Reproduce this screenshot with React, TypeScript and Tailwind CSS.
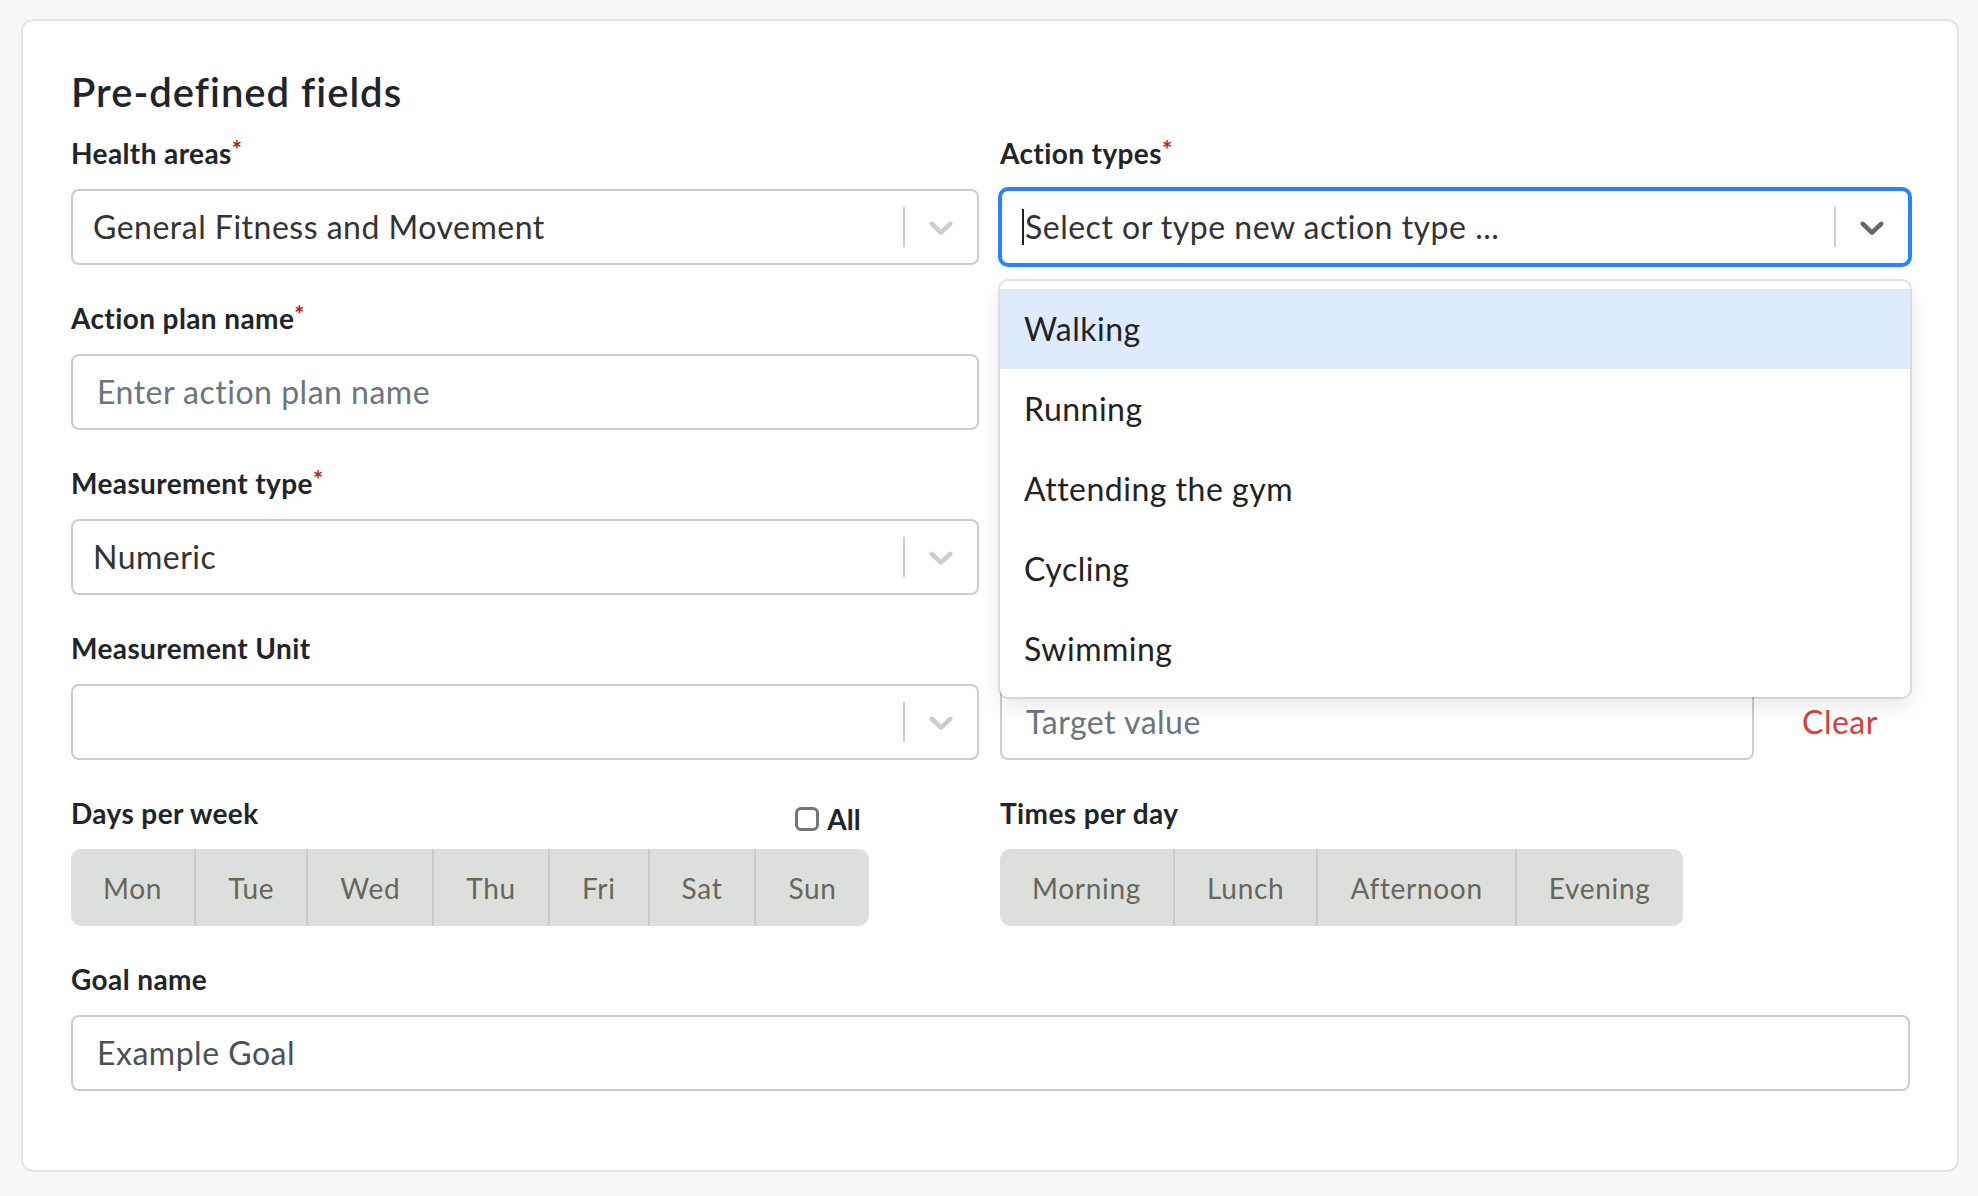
import React from "react";

const FONT = { fontFamily: "Lato, 'Open Sans', sans-serif" };

const Chevron = ({ dark }: { dark?: boolean }) => (
  <svg
    viewBox="0 0 20 20"
    className={dark ? "h-[40px] w-[40px] fill-[#666666]" : "h-[40px] w-[40px] fill-[#cccccc]"}
    aria-hidden="true"
  >
    <path d="M4.516 7.548c0.436-0.446 1.043-0.481 1.576 0l3.908 3.747 3.908-3.747c0.533-0.481 1.141-0.446 1.574 0 0.436 0.445 0.408 1.197 0 1.615-0.406 0.418-4.695 4.502-4.695 4.502-0.217 0.223-0.502 0.335-0.787 0.335s-0.57-0.112-0.789-0.335c0 0-4.287-4.084-4.695-4.502s-0.436-1.17 0-1.615z" />
  </svg>
);

const Label = ({ text, required }: { text?: string; required?: boolean }) => (
  <div className="mb-[18px] h-[36px] text-[28px] font-bold leading-[36px] tracking-[0.4px] text-[#212529]">
    {text}
    {required && <span className="relative -top-[5px] text-[24px] text-[#b71c1c]">*</span>}
  </div>
);

const Select = ({ value, focused, placeholder }: { value?: string; focused?: boolean; placeholder?: string }) => (
  <div
    className={
      focused
        ? "flex h-[76px] items-center rounded-[8px] border-2 border-[#2684ff] bg-white shadow-[0_0_0_2px_#2684ff]"
        : "flex h-[76px] items-center rounded-[8px] border-2 border-[#cccccc] bg-white"
    }
  >
    <div className="flex flex-1 items-center px-[20px] text-[32px] tracking-[0.5px] text-[#333333]">
      {focused && <span className="mr-[1px] h-[36px] w-[2px] bg-[#222222]" />}
      {value ?? placeholder}
    </div>
    <span className="h-[40px] w-[2px] bg-[#cccccc]" />
    <div className="px-[16px]">
      <Chevron dark={focused} />
    </div>
  </div>
);

const Input = ({ placeholder, value }: { placeholder?: string; value?: string }) => (
  <div className="flex h-[76px] items-center rounded-[8px] border-2 border-[#cccccc] bg-white px-[24px] text-[32px] tracking-[0.5px]">
    {value ? (
      <span className="text-[#495057]">{value}</span>
    ) : (
      <span className="text-[#6c757d]">{placeholder}</span>
    )}
  </div>
);

const Segments = ({ items }: { items: string[] }) => (
  <div className="flex h-[77px] w-fit overflow-hidden rounded-[10px] bg-[#dddfdd]">
    {items.map((item, i) => (
      <div
        key={item}
        className={
          i === 0
            ? "flex items-center px-[32px] text-[28px] tracking-[0.7px] text-[#66665b]"
            : "flex items-center border-l-2 border-[#c8c9c8] px-[32px] text-[28px] tracking-[0.7px] text-[#66665b]"
        }
      >
        {item}
      </div>
    ))}
  </div>
);

const actionTypes = ["Walking", "Running", "Attending the gym", "Cycling", "Swimming"];

export default function App() {
  return (
    <div className="min-h-screen bg-[#f7f8fa] pb-[25px] pl-[21px] pr-[19px] pt-[19px]" style={FONT}>
      <div className="rounded-[12px] border-2 border-[#e3e4e6] bg-white px-[48px] pb-[79px] pt-[47px]">
        <h2 className="mb-[19px] h-[48px] text-[40px] font-semibold leading-[48px] tracking-[1px] text-[#212529]">
          Pre-defined fields
        </h2>

        <div className="grid grid-cols-[908px_910px] gap-x-[21px]">
          {/* left column */}
          <div>
            <Label text="Health areas" required />
            <Select value="General Fitness and Movement" />
            <div className="h-[35px]" />

            <Label text="Action plan name" required />
            <Input placeholder="Enter action plan name" />
            <div className="h-[35px]" />

            <Label text="Measurement type" required />
            <Select value="Numeric" />
            <div className="h-[35px]" />

            <Label text="Measurement Unit" />
            <Select value="" />
            <div className="h-[35px]" />

            <div className="w-fit">
              <div className="mb-[18px] flex h-[36px] items-start justify-between">
                <span className="text-[28px] font-bold leading-[36px] tracking-[0.4px] text-[#212529]">
                  Days per week
                </span>
                <label className="mr-[8px] mt-[8px] flex items-center gap-[8px]">
                  <span className="h-[24px] w-[24px] rounded-[6px] border-[3px] border-[#767676]" />
                  <span className="text-[28px] font-bold leading-[32px] text-[#212529]">All</span>
                </label>
              </div>
              <Segments items={["Mon", "Tue", "Wed", "Thu", "Fri", "Sat", "Sun"]} />
            </div>
          </div>

          {/* right column */}
          <div>
            <Label text="Action types" required />
            <div className="relative">
              <Select focused placeholder="Select or type new action type ..." />
              <div className="absolute left-0 right-0 top-full z-10 mt-[16px] rounded-[8px] bg-white py-[8px] shadow-[0_0_0_2px_rgba(0,0,0,0.1),0_8px_22px_rgba(0,0,0,0.1)]">
                {actionTypes.map((t, i) => (
                  <div
                    key={t}
                    className={
                      i === 0
                        ? "h-[80px] bg-[#deebff] px-[24px] text-[32px] leading-[80px] tracking-[0.5px] text-[#222222]"
                        : "h-[80px] px-[24px] text-[32px] leading-[80px] tracking-[0.5px] text-[#222222]"
                    }
                  >
                    {t}
                  </div>
                ))}
              </div>
            </div>
            <div className="h-[35px]" />

            {/* rows hidden under the open menu */}
            <Label />
            <div className="h-[76px]" />
            <div className="h-[35px]" />

            <Label />
            <div className="h-[76px]" />
            <div className="h-[35px]" />

            <Label />
            <div className="flex items-center">
              <div className="flex-1">
                <Input placeholder="Target value" />
              </div>
              <button className="w-[156px] pl-[16px] text-center text-[32px] tracking-[0.5px] text-[#d6403a]">
                Clear
              </button>
            </div>
            <div className="h-[35px]" />

            <div className="mb-[18px] h-[36px] text-[28px] font-bold leading-[36px] tracking-[0.4px] text-[#212529]">
              Times per day
            </div>
            <Segments items={["Morning", "Lunch", "Afternoon", "Evening"]} />
          </div>

          <div className="col-span-2">
            <div className="h-[35px]" />
            <Label text="Goal name" />
            <Input value="Example Goal" />
          </div>
        </div>
      </div>
    </div>
  );
}
